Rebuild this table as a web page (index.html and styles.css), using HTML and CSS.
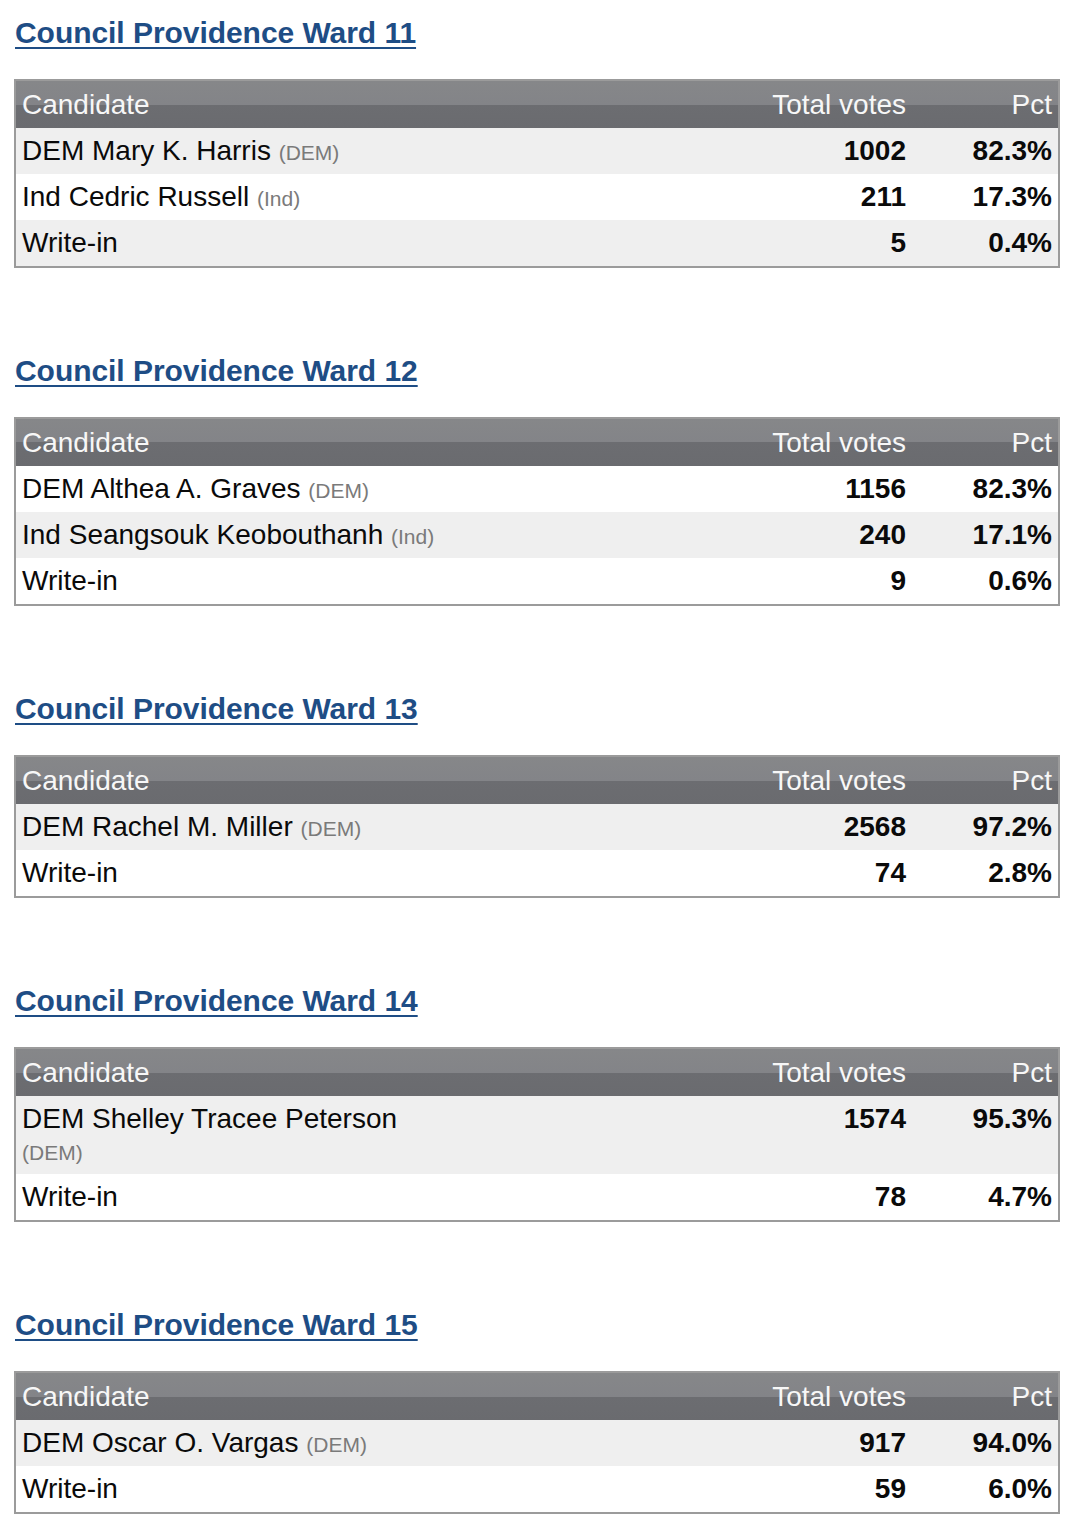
FILE: index.html
```html
<!DOCTYPE html>
<html lang="en">
<head>
<meta charset="utf-8">
<title>Council Providence Wards</title>
<link rel="stylesheet" href="styles.css">
</head>
<body>
<section class="race">
  <h2 class="race-title"><a href="#">Council Providence Ward 11</a></h2>
  <div class="results">
    <table>
      <colgroup><col class="c-name"><col class="c-votes"><col class="c-pct"></colgroup>
      <thead><tr><th class="name">Candidate</th><th class="num">Total votes</th><th class="num">Pct</th></tr></thead>
      <tbody>
        <tr class="shaded"><td class="name">DEM Mary K. Harris <span class="party">(DEM)</span></td><td class="num">1002</td><td class="num">82.3%</td></tr>
        <tr class="plain"><td class="name">Ind Cedric Russell <span class="party">(Ind)</span></td><td class="num">211</td><td class="num">17.3%</td></tr>
        <tr class="shaded"><td class="name">Write-in</td><td class="num">5</td><td class="num">0.4%</td></tr>
      </tbody>
    </table>
  </div>
</section>
<section class="race">
  <h2 class="race-title"><a href="#">Council Providence Ward 12</a></h2>
  <div class="results">
    <table>
      <colgroup><col class="c-name"><col class="c-votes"><col class="c-pct"></colgroup>
      <thead><tr><th class="name">Candidate</th><th class="num">Total votes</th><th class="num">Pct</th></tr></thead>
      <tbody>
        <tr class="plain"><td class="name">DEM Althea A. Graves <span class="party">(DEM)</span></td><td class="num">1156</td><td class="num">82.3%</td></tr>
        <tr class="shaded"><td class="name">Ind Seangsouk Keobouthanh <span class="party">(Ind)</span></td><td class="num">240</td><td class="num">17.1%</td></tr>
        <tr class="plain"><td class="name">Write-in</td><td class="num">9</td><td class="num">0.6%</td></tr>
      </tbody>
    </table>
  </div>
</section>
<section class="race">
  <h2 class="race-title"><a href="#">Council Providence Ward 13</a></h2>
  <div class="results">
    <table>
      <colgroup><col class="c-name"><col class="c-votes"><col class="c-pct"></colgroup>
      <thead><tr><th class="name">Candidate</th><th class="num">Total votes</th><th class="num">Pct</th></tr></thead>
      <tbody>
        <tr class="shaded"><td class="name">DEM Rachel M. Miller <span class="party">(DEM)</span></td><td class="num">2568</td><td class="num">97.2%</td></tr>
        <tr class="plain"><td class="name">Write-in</td><td class="num">74</td><td class="num">2.8%</td></tr>
      </tbody>
    </table>
  </div>
</section>
<section class="race">
  <h2 class="race-title"><a href="#">Council Providence Ward 14</a></h2>
  <div class="results">
    <table>
      <colgroup><col class="c-name"><col class="c-votes"><col class="c-pct"></colgroup>
      <thead><tr><th class="name">Candidate</th><th class="num">Total votes</th><th class="num">Pct</th></tr></thead>
      <tbody>
        <tr class="shaded"><td class="name">DEM Shelley Tracee Peterson <span class="party">(DEM)</span></td><td class="num">1574</td><td class="num">95.3%</td></tr>
        <tr class="plain"><td class="name">Write-in</td><td class="num">78</td><td class="num">4.7%</td></tr>
      </tbody>
    </table>
  </div>
</section>
<section class="race">
  <h2 class="race-title"><a href="#">Council Providence Ward 15</a></h2>
  <div class="results">
    <table>
      <colgroup><col class="c-name"><col class="c-votes"><col class="c-pct"></colgroup>
      <thead><tr><th class="name">Candidate</th><th class="num">Total votes</th><th class="num">Pct</th></tr></thead>
      <tbody>
        <tr class="shaded"><td class="name">DEM Oscar O. Vargas <span class="party">(DEM)</span></td><td class="num">917</td><td class="num">94.0%</td></tr>
        <tr class="plain"><td class="name">Write-in</td><td class="num">59</td><td class="num">6.0%</td></tr>
      </tbody>
    </table>
  </div>
</section>
</body>
</html>
```
FILE: styles.css
```css
html, body {
  margin: 0;
  padding: 0;
  background: #ffffff;
}
body {
  padding: 15px 18px 0 14px;
  font-family: "Liberation Sans", Arial, Helvetica, sans-serif;
  color: #0a0a0a;
}
.race {
  margin-bottom: 85px;
}
.race-title {
  margin: 0 0 28px 1px;
  font-size: 30px;
  line-height: 36px;
  font-weight: bold;
  letter-spacing: -0.05px;
}
.race-title a {
  color: #1e4d85;
  text-decoration: underline;
  text-decoration-thickness: 2px;
  text-underline-offset: 4px;
}
.results {
  border: 2px solid #9b9b9b;
  width: 1042px;
}
.results table {
  width: 100%;
  border-collapse: collapse;
  table-layout: fixed;
  font-size: 28px;
}
.c-name { width: 440px; }
.c-votes { width: 456px; }
.c-pct { width: 146px; }
.results th {
  font-weight: normal;
  color: #f7f7f7;
  padding: 8px 6px;
  height: 31px;
  line-height: 31px;
  background: linear-gradient(to bottom, #868789 0%, #838488 50%, #6c6d71 50%, #6a6b6f 100%);
}
.results td {
  padding: 7px 6px;
  height: 32px;
  line-height: 32px;
  vertical-align: top;
}
.results tr.shaded td {
  background-color: #efefef;
}
.results tr.plain td {
  background-color: #ffffff;
}
.results .name {
  text-align: left;
}
.results .num {
  text-align: right;
}
.results td.num {
  font-weight: bold;
}
.party {
  font-size: 21px;
  line-height: 20px;
  color: #7a7a7a;
}
```
